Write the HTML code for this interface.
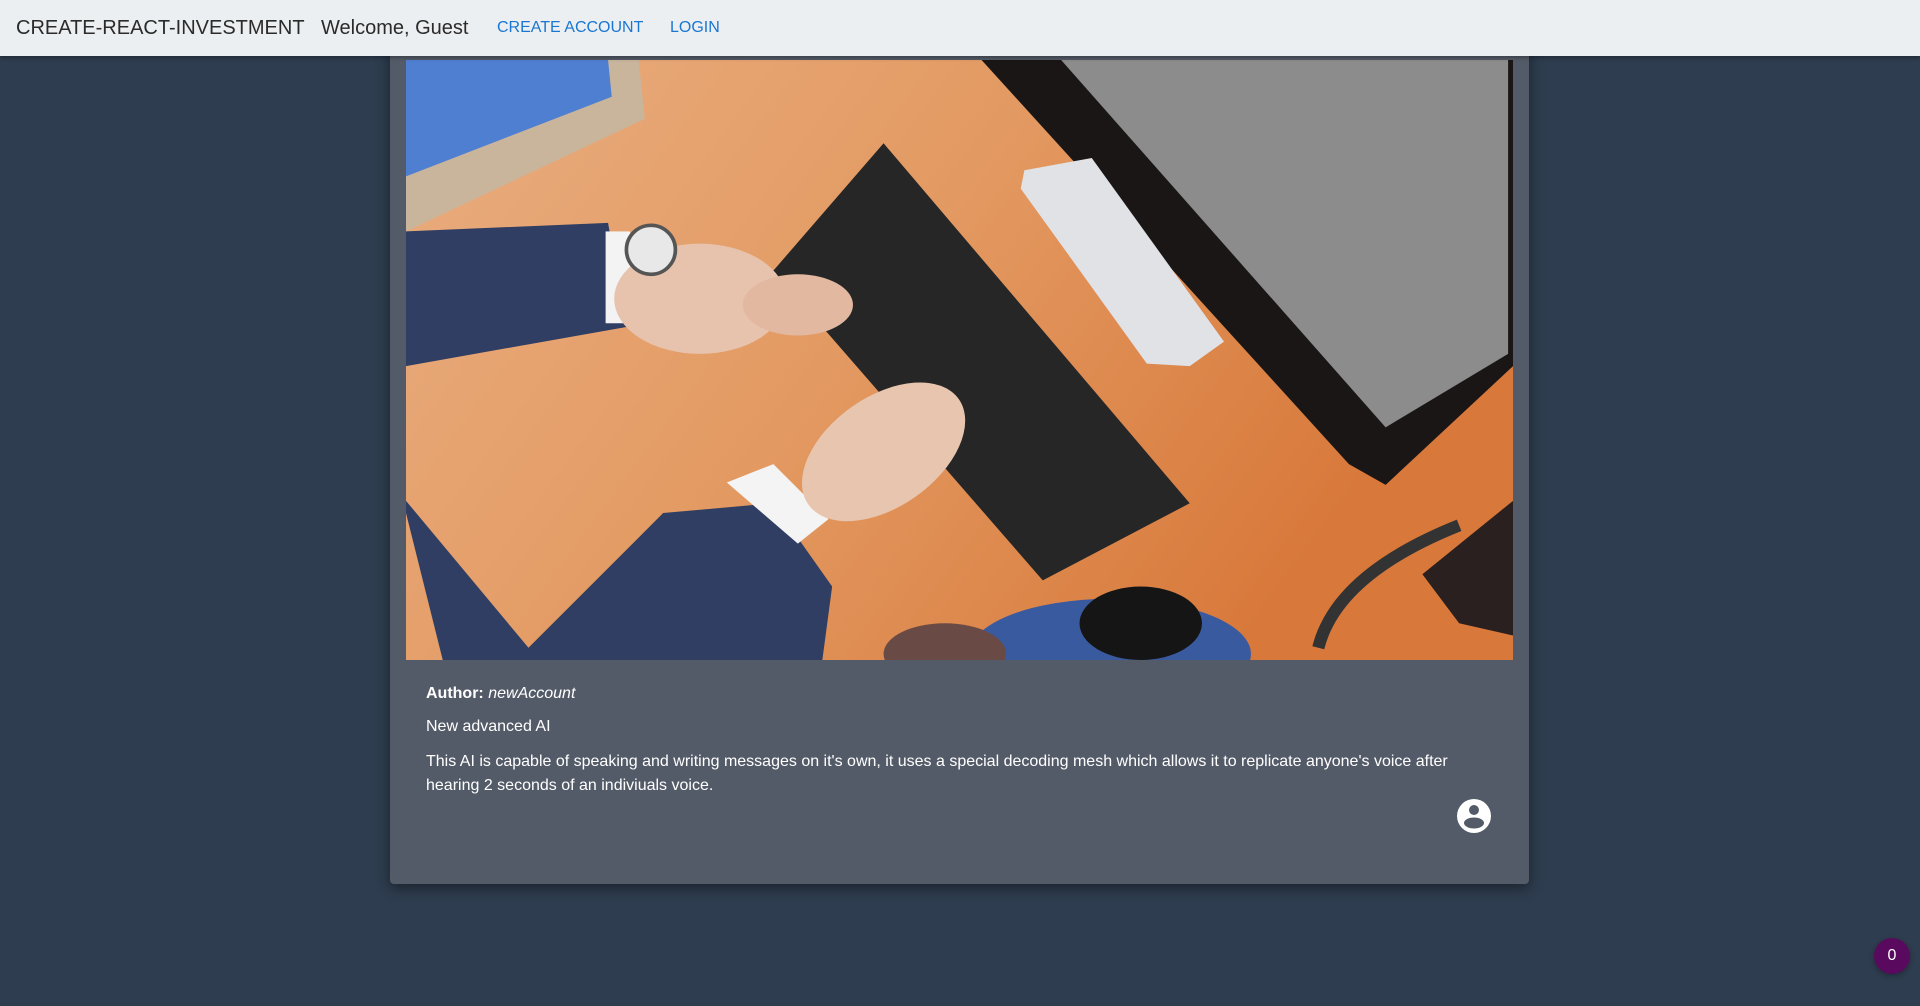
<!DOCTYPE html>
<html><head><meta charset="utf-8"><style>
*{margin:0;padding:0;box-sizing:border-box}
html,body{width:1920px;height:1006px;overflow:hidden;background:#2e3d4f;font-family:"Liberation Sans",Arial,sans-serif}
.bar{position:absolute;left:0;top:0;width:1920px;height:56px;background:#eceff1;box-shadow:0 2px 4px rgba(0,0,0,.3);z-index:2}
.bar span{position:absolute;top:17px;font-size:20px;color:#2b2b2b;white-space:nowrap}
.bar a{position:absolute;top:19px;font-size:16px;color:#1976d2;text-decoration:none;white-space:nowrap}
.card{position:absolute;left:390px;top:44px;width:1139px;height:840px;background:#545b68;border-radius:4px;box-shadow:0 4px 14px rgba(0,0,0,.45)}
.img{position:absolute;left:16px;top:16px;width:1107px;height:600px;overflow:hidden}
.txt{position:absolute;left:36px;color:#fff;font-size:16px;white-space:nowrap}
.badge{position:absolute;left:1874px;top:938px;width:36px;height:36px;border-radius:50%;background:#5a0a5e;color:#fff;font-size:16px;text-align:center;line-height:36px;box-shadow:0 2px 6px rgba(0,0,0,.3)}
</style></head><body>
<div class="bar">
<span style="left:16px">CREATE-REACT-INVESTMENT</span>
<span style="left:321px">Welcome, Guest</span>
<a style="left:497px">CREATE ACCOUNT</a>
<a style="left:670px">LOGIN</a>
</div>
<div class="card">
<div class="img">
<svg width="1107" height="600" viewBox="0 0 904 490" preserveAspectRatio="none">
<defs><linearGradient id="d" x1="0" y1="0" x2="1" y2="0.4"><stop offset="0" stop-color="#e9ad80"/><stop offset=".5" stop-color="#e39a62"/><stop offset="1" stop-color="#d8783a"/></linearGradient></defs>
<rect width="904" height="490" fill="url(#d)"/>
<polygon points="0,0 190,0 195,48 0,140" fill="#c9b59c"/>
<polygon points="0,0 165,0 168,30 0,95" fill="#4f7fd0"/>
<polygon points="470,0 904,0 904,250 800,347 770,330" fill="#1b1616"/>
<polygon points="535,0 900,0 900,240 800,300" fill="#8c8c8c"/>
<polygon points="505,90 560,80 668,230 640,250 605,248 502,105" fill="#e0e2e6"/>
<polygon points="300,172 390,68 640,362 520,425" fill="#262626"/>
<polygon points="0,140 165,133 180,218 0,250" fill="#2f3e62"/>
<rect x="163" y="140" width="20" height="75" fill="#f3f3f3"/>
<ellipse cx="240" cy="195" rx="70" ry="45" fill="#e7c3ad"/>
<ellipse cx="320" cy="200" rx="45" ry="25" fill="#e2b9a0"/>
<circle cx="200" cy="155" r="20" fill="#e8e8e8" stroke="#555" stroke-width="3"/>
<polygon points="0,370 30,490 340,490 348,430 300,362 210,370 100,480 0,360" fill="#2f3e62"/>
<polygon points="262,345 300,330 345,375 320,395" fill="#f4f4f4"/>
<ellipse cx="390" cy="320" rx="75" ry="45" transform="rotate(-35 390 320)" fill="#e8c5ae"/>
<ellipse cx="575" cy="485" rx="115" ry="45" fill="#3a5aa0"/>
<ellipse cx="600" cy="460" rx="50" ry="30" fill="#151515"/>
<ellipse cx="440" cy="485" rx="50" ry="25" fill="#6a4a45"/>
<polygon points="830,420 904,360 904,470 860,460" fill="#2a2020"/>
<path d="M745,480 Q760,420 860,380" stroke="#333" stroke-width="10" fill="none"/>
</svg>
</div>
<div class="txt" style="top:641px"><b>Author:</b> <i>newAccount</i></div>
<div class="txt" style="top:674px">New advanced AI</div>
<div class="txt" style="top:706px;line-height:24px">This AI is capable of speaking and writing messages on it's own, it uses a special decoding mesh which allows it to replicate anyone's voice after<br>hearing 2 seconds of an indiviuals voice.</div>
<svg style="position:absolute;left:1067px;top:755px" width="34" height="34" viewBox="0 0 34 34">
<circle cx="17" cy="17" r="17" fill="#fff"/>
<circle cx="17" cy="11" r="5" fill="#545b68"/>
<ellipse cx="17" cy="24" rx="10" ry="5.5" fill="#545b68"/>
</svg>
</div>
<div class="badge">0</div>
</body></html>
